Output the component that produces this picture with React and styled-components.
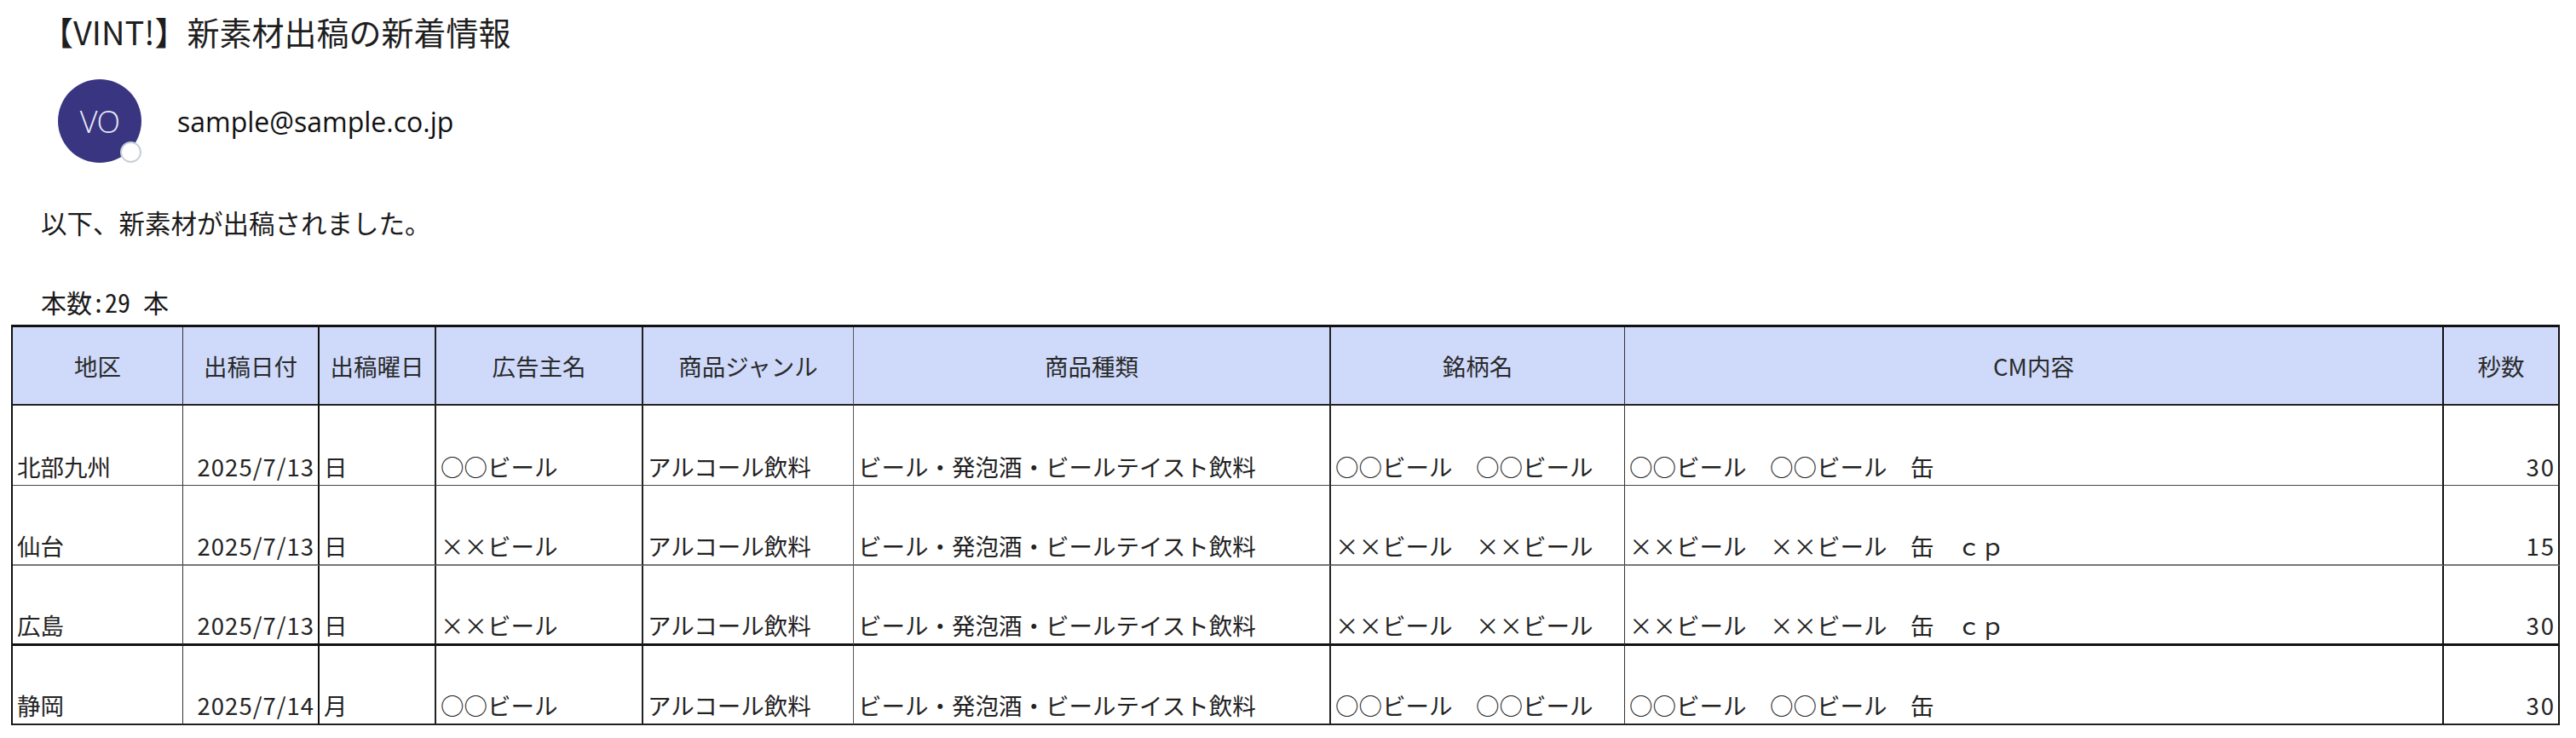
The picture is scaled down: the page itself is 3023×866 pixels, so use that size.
import styled, { createGlobalStyle } from "styled-components";

const GlobalStyle = createGlobalStyle`
  body {
    margin: 0;
    background: #ffffff;
    color: #222222;
    font-family: "Noto Sans CJK JP", "Noto Sans", sans-serif;
  }
`;

const columns = [
  { key: "area", label: "地区", width: 200, line: "1px solid #333" },
  { key: "date", label: "出稿日付", width: 160, line: "2px solid #111", align: "right", spacing: 1 },
  { key: "day", label: "出稿曜日", width: 137, line: "2px solid #222" },
  { key: "advertiser", label: "広告主名", width: 243, line: "2px solid #222", wide: true },
  { key: "genre", label: "商品ジャンル", width: 247, line: "1px solid #555" },
  { key: "kind", label: "商品種類", width: 560, line: "2px solid #222" },
  { key: "brand", label: "銘柄名", width: 345, line: "1px solid #333", wide: true },
  { key: "cm", label: "CM内容", width: 961, line: "2px solid #111", wide: true },
  { key: "sec", label: "秒数", width: 136, line: "2px solid #111", align: "right", spacing: 2 },
];

const rows = [
  {
    line: "1px solid #444",
    area: "北部九州",
    date: "2025/7/13",
    day: "日",
    advertiser: "○○ビール",
    genre: "アルコール飲料",
    kind: "ビール・発泡酒・ビールテイスト飲料",
    brand: "○○ビール　○○ビール",
    cm: "○○ビール　○○ビール　缶",
    sec: "30",
  },
  {
    line: "2px solid #777",
    area: "仙台",
    date: "2025/7/13",
    day: "日",
    advertiser: "××ビール",
    genre: "アルコール飲料",
    kind: "ビール・発泡酒・ビールテイスト飲料",
    brand: "××ビール　××ビール",
    cm: "××ビール　××ビール　缶　ｃｐ",
    sec: "15",
  },
  {
    line: "3px solid #111",
    area: "広島",
    date: "2025/7/13",
    day: "日",
    advertiser: "××ビール",
    genre: "アルコール飲料",
    kind: "ビール・発泡酒・ビールテイスト飲料",
    brand: "××ビール　××ビール",
    cm: "××ビール　××ビール　缶　ｃｐ",
    sec: "30",
  },
  {
    line: "2px solid #222",
    area: "静岡",
    date: "2025/7/14",
    day: "月",
    advertiser: "○○ビール",
    genre: "アルコール飲料",
    kind: "ビール・発泡酒・ビールテイスト飲料",
    brand: "○○ビール　○○ビール",
    cm: "○○ビール　○○ビール　缶",
    sec: "30",
  },
];

export default function App() {
  return (
    <>
      <GlobalStyle />
      <Page>
        <Title>【VINT!】新素材出稿の新着情報</Title>
        <Sender>
          <Avatar>
            VO
            <Presence />
          </Avatar>
          <Email>sample@sample.co.jp</Email>
        </Sender>
        <Message>以下、新素材が出稿されました。</Message>
        <Count>本数:29 本</Count>
        <Sheet $cols={columns.map((c) => `${c.width}px`).join(" ")}>
          {columns.map((col) => (
            <HeadCell key={col.key} $line={col.line}>
              {col.label}
            </HeadCell>
          ))}
          {rows.map((row, i) => (
            <Row key={i}>
              {columns.map((col) => (
                <Cell
                  key={col.key}
                  $line={col.line}
                  $rowLine={row.line}
                  $align={col.align}
                  $wide={col.wide}
                  $spacing={col.spacing}
                >
                  {row[col.key]}
                </Cell>
              ))}
            </Row>
          ))}
        </Sheet>
      </Page>
    </>
  );
}

const Page = styled.div`
  padding: 14px 0 0 48px;
`;

const Title = styled.h1`
  margin: 0;
  font-family: "Noto Sans CJK JP", sans-serif;
  font-weight: 400;
  font-size: 38px;
  line-height: 46px;
  color: #1e1e1e;
`;

const Sender = styled.div`
  display: flex;
  align-items: center;
  gap: 42px;
  margin: 33px 0 0 20px;
`;

const Avatar = styled.div`
  position: relative;
  width: 98px;
  height: 98px;
  border-radius: 50%;
  background: #3a3581;
  display: flex;
  align-items: center;
  justify-content: center;
  font-family: "Open Sans", sans-serif;
  font-weight: 300;
  font-size: 36px;
  color: #e9e9f3;
  letter-spacing: -1px;
`;

const Presence = styled.span`
  position: absolute;
  right: 0;
  bottom: 0;
  width: 21px;
  height: 21px;
  border-radius: 50%;
  background: #ffffff;
  border: 2px solid #c5cfd6;
`;

const Email = styled.span`
  font-family: "Open Sans", sans-serif;
  font-size: 32px;
  color: #111111;
`;

const Message = styled.p`
  margin: 50px 0 0;
  font-size: 30.5px;
  line-height: 40px;
  color: #1a1a1a;
`;

const Count = styled.p`
  margin: 53px 0 0;
  font-size: 30px;
  line-height: 40px;
  color: #1a1a1a;
  font-feature-settings: "hwid";
`;

const Sheet = styled.div`
  display: grid;
  grid-template-columns: ${(p) => p.$cols};
  grid-template-rows: 92px 94px 94px 94px 93px;
  width: max-content;
  margin: 7px 0 0 -35px;
  border-top: 3px solid #111;
  border-left: 2px solid #111;
  font-family: "Noto Sans CJK JP", sans-serif;
  font-size: 27.5px;
  color: #222222;
`;

const Row = styled.div`
  display: contents;
`;

const HeadCell = styled.div`
  box-sizing: border-box;
  display: flex;
  align-items: center;
  justify-content: center;
  background: #cfdafb;
  border-right: ${(p) => p.$line};
  border-bottom: 2px solid #222;
  white-space: nowrap;
  color: #2a2a2a;
`;

const Cell = styled.div`
  box-sizing: border-box;
  display: flex;
  align-items: flex-end;
  justify-content: ${(p) => (p.$align === "right" ? "flex-end" : "flex-start")};
  padding: 0 ${(p) => 5 - (p.$spacing || 0)}px 4px 5px;
  border-right: ${(p) => p.$line};
  border-bottom: ${(p) => p.$rowLine};
  white-space: pre;
  line-height: 36px;
  letter-spacing: ${(p) => p.$spacing || 0}px;
  font-feature-settings: ${(p) => (p.$wide ? '"fwid"' : "normal")};
`;
